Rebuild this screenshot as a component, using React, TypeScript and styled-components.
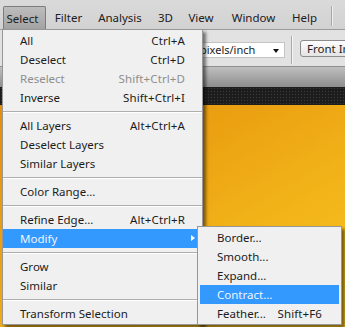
import React from "react";
import styled, { createGlobalStyle } from "styled-components";

const Global = createGlobalStyle`
  html, body { margin: 0; padding: 0; background: #d5d5d5; }
  body { width: 345px; height: 327px; overflow: hidden; }
  * { box-sizing: border-box; }
`;

const FONT = `"Noto Sans", "Open Sans", Arial, sans-serif`;

const Screen = styled.div`
  position: relative;
  width: 345px;
  height: 327px;
  overflow: hidden;
  display: flex;
  flex-direction: column;
  font-family: ${FONT};
  font-size: 11.5px;
  color: #1e1e1e;
`;

const MenuBar = styled.div`
  height: 29px;
  flex: none;
  display: flex;
  align-items: flex-end;
  padding-left: 3px;
  background: linear-gradient(#dadada, #d2d2d2);
`;

const MenuTitle = styled.div<{ $w: number; $active?: boolean }>`
  flex: none;
  width: ${(p) => p.$w}px;
  height: 23px;
  display: flex;
  align-items: center;
  justify-content: center;
  padding-right: ${(p) => (p.$active ? 4 : 0)}px;
  color: #202020;
  ${(p) =>
    p.$active &&
    `
    background: linear-gradient(#bdbdbd, #a3a3a3);
    border: 1px solid #7c7c7c;
    border-bottom: none;
    border-radius: 2px 2px 0 0;
  `}
`;

const BarDivider = styled.div`
  flex: none;
  width: 1px;
  height: 20px;
  margin: 0 0 3px 9px;
  background: #a8a8a8;
  box-shadow: 1px 0 0 #eeeeee;
  align-self: flex-end;
`;

const Toolbar = styled.div`
  height: 37px;
  flex: none;
  display: flex;
  align-items: center;
  padding-top: 3px;
  background: #e2e2e2;
  border-top: 1px solid #9a9a9a;
  overflow: hidden;
`;

const SelectBox = styled.div`
  flex: none;
  margin-left: 198px;
  width: 87px;
  height: 16px;
  display: flex;
  align-items: center;
  justify-content: space-between;
  padding: 0 5px 0 1px;
  background: #fff;
  border: 1px solid #c4c4c4;
  font-size: 11px;
  color: #222;
`;

const DownArrow = styled.span`
  width: 0;
  height: 0;
  margin-top: 2px;
  border-left: 3.5px solid transparent;
  border-right: 3.5px solid transparent;
  border-top: 4px solid #111;
`;

const ToolDivider = styled.div`
  flex: none;
  width: 1px;
  height: 28px;
  margin-left: 6px;
  background: #a9a9a9;
  box-shadow: 1px 0 0 #f6f6f6;
`;

const ToolButton = styled.div`
  flex: none;
  margin-left: 8px;
  height: 17px;
  margin-top: -3px;
  padding: 0 10px 0 6px;
  display: flex;
  align-items: center;
  white-space: nowrap;
  background: linear-gradient(#fdfdfd, #e4e4e4);
  border: 1px solid #8c8c8c;
  border-radius: 3px;
  font-size: 11.5px;
  color: #222;
`;

const GrayBand = styled.div`
  height: 21px;
  flex: none;
  background: linear-gradient(#bfbfbf, #9c9c9c 70%, #8e8e8e);
  border-top: 1px solid #8f8f8f;
`;

const DarkBand = styled.div`
  height: 18px;
  flex: none;
  background-color: #1d1d1d;
  background-image: radial-gradient(#3b3b3b 0.7px, transparent 0.9px);
  background-size: 3px 3px;
`;

const Canvas = styled.div`
  flex: 1;
  background: linear-gradient(150deg, #e68f0a 0%, #eba112 35%, #f2b419 65%, #f7c421 100%);
`;

const Menu = styled.div<{ $left: number; $top: number; $width: number; $padX: number }>`
  position: absolute;
  left: ${(p) => p.$left}px;
  top: ${(p) => p.$top}px;
  width: ${(p) => p.$width}px;
  padding: 1px ${(p) => p.$padX}px;
  background: #f0f0f0;
  border: 1px solid #979797;
  box-shadow: 3px 3px 3px rgba(0, 0, 0, 0.5);
`;

const Item = styled.div<{ $hl?: boolean; $disabled?: boolean; $padL: number; $padR: number }>`
  height: 19px;
  display: flex;
  align-items: center;
  justify-content: space-between;
  padding: 0 ${(p) => p.$padR}px 0 ${(p) => p.$padL}px;
  white-space: nowrap;
  position: relative;
  color: ${(p) => (p.$hl ? "#eef5ff" : p.$disabled ? "#8e8e8e" : "#1c1c1c")};
  background: ${(p) => (p.$hl ? "#3399ff" : "transparent")};
`;

const Shortcut = styled.span`
  letter-spacing: 0.1px;
`;

const SubArrow = styled.span`
  position: absolute;
  right: 7px;
  top: 6px;
  width: 0;
  height: 0;
  border-top: 3.5px solid transparent;
  border-bottom: 3.5px solid transparent;
  border-left: 4px solid #ffffff;
`;

const Sep = styled.div`
  height: 9px;
  display: flex;
  align-items: center;
  &::before {
    content: "";
    flex: 1;
    height: 1px;
    background: #aeaeae;
    box-shadow: 0 1px 0 #ffffff;
  }
`;

type Entry =
  | { sep: true }
  | { label: string; key?: string; hl?: boolean; disabled?: boolean; sub?: boolean };

const mainItems: Entry[] = [
  { label: "All", key: "Ctrl+A" },
  { label: "Deselect", key: "Ctrl+D" },
  { label: "Reselect", key: "Shift+Ctrl+D", disabled: true },
  { label: "Inverse", key: "Shift+Ctrl+I" },
  { sep: true },
  { label: "All Layers", key: "Alt+Ctrl+A" },
  { label: "Deselect Layers" },
  { label: "Similar Layers" },
  { sep: true },
  { label: "Color Range..." },
  { sep: true },
  { label: "Refine Edge...", key: "Alt+Ctrl+R" },
  { label: "Modify", hl: true, sub: true },
  { sep: true },
  { label: "Grow" },
  { label: "Similar" },
  { sep: true },
  { label: "Transform Selection" },
];

const subItems: Entry[] = [
  { label: "Border..." },
  { label: "Smooth..." },
  { label: "Expand..." },
  { label: "Contract...", hl: true },
  { label: "Feather...", key: "Shift+F6" },
];

function renderEntries(list: Entry[], padL: number, padR: number) {
  return list.map((e, i) =>
    "sep" in e ? (
      <Sep key={i} />
    ) : (
      <Item key={i} $hl={e.hl} $disabled={e.disabled} $padL={padL} $padR={padR}>
        <span>{e.label}</span>
        {e.key && <Shortcut>{e.key}</Shortcut>}
        {e.sub && <SubArrow />}
      </Item>
    )
  );
}

const titles: { t: string; w: number; active?: boolean }[] = [
  { t: "Select", w: 43, active: true },
  { t: "Filter", w: 45 },
  { t: "Analysis", w: 58 },
  { t: "3D", w: 33 },
  { t: "View", w: 38 },
  { t: "Window", w: 67 },
  { t: "Help", w: 35 },
];

export default function App() {
  return (
    <>
      <Global />
      <Screen>
        <MenuBar>
          {titles.map((m) => (
            <MenuTitle key={m.t} $w={m.w} $active={m.active}>
              {m.t}
            </MenuTitle>
          ))}
          <BarDivider />
        </MenuBar>
        <Toolbar>
          <SelectBox>
            <span>pixels/inch</span>
            <DownArrow />
          </SelectBox>
          <ToolDivider />
          <ToolButton>Front Image</ToolButton>
        </Toolbar>
        <GrayBand />
        <DarkBand />
        <Canvas />
        <Menu $left={2} $top={29} $width={201} $padX={0}>
          {renderEntries(mainItems, 17, 17)}
        </Menu>
        <Menu $left={197} $top={226} $width={145} $padX={2}>
          {renderEntries(subItems, 17, 17)}
        </Menu>
      </Screen>
    </>
  );
}
